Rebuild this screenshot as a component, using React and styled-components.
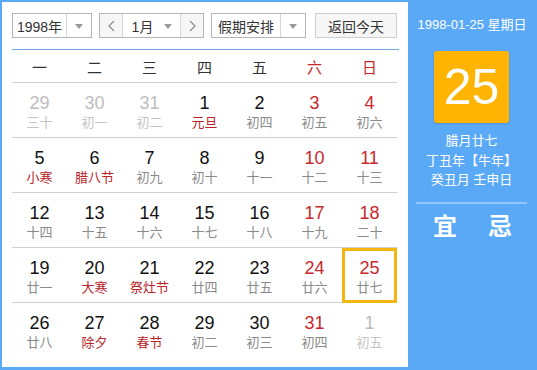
import styled, { createGlobalStyle } from "styled-components";

const GlobalStyle = createGlobalStyle`
  body {
    margin: 0;
    font-family: "Liberation Sans", "Noto Sans CJK SC", sans-serif;
  }
`;

const BLUE = "#5aa9f7";
const RED = "#c9272d";

const weekdays = ["一", "二", "三", "四", "五", "六", "日"];

// [day, lunar, kind] kind: o = other month, h = holiday (red lunar), s = selected
const weeks = [
  [["29", "三十", "o"], ["30", "初一", "o"], ["31", "初二", "o"], ["1", "元旦", "h"], ["2", "初四"], ["3", "初五"], ["4", "初六"]],
  [["5", "小寒", "h"], ["6", "腊八节", "h"], ["7", "初九"], ["8", "初十"], ["9", "十一"], ["10", "十二"], ["11", "十三"]],
  [["12", "十四"], ["13", "十五"], ["14", "十六"], ["15", "十七"], ["16", "十八"], ["17", "十九"], ["18", "二十"]],
  [["19", "廿一"], ["20", "大寒", "h"], ["21", "祭灶节", "h"], ["22", "廿四"], ["23", "廿五"], ["24", "廿六"], ["25", "廿七", "s"]],
  [["26", "廿八"], ["27", "除夕", "h"], ["28", "春节", "h"], ["29", "初二"], ["30", "初三"], ["31", "初四"], ["1", "初五", "o"]],
];

export default function App() {
  return (
    <>
      <GlobalStyle />
      <Frame>
        <Main>
          <Toolbar>
            <Select $width={80}>
              <SelectLabel>1998年</SelectLabel>
              <Caret />
            </Select>
            <MonthGroup>
              <StepButton>
                <Chevron dir="left" />
              </StepButton>
              <MonthSelect>
                <SelectLabel>1月</SelectLabel>
                <Caret $plain />
              </MonthSelect>
              <StepButton $right>
                <Chevron dir="right" />
              </StepButton>
            </MonthGroup>
            <Select $width={95}>
              <SelectLabel>假期安排</SelectLabel>
              <Caret />
            </Select>
            <TodayButton>返回今天</TodayButton>
          </Toolbar>
          <Grid>
            {weekdays.map((w, i) => (
              <WeekHead key={w} $weekend={i >= 5}>
                {w}
              </WeekHead>
            ))}
            {weeks.map((week, r) =>
              week.map(([day, lunar, kind], c) => (
                <Cell key={`${r}-${c}`} $selected={kind === "s"}>
                  <Day $other={kind === "o"} $weekend={c >= 5}>
                    {day}
                  </Day>
                  <Lunar $other={kind === "o"} $holiday={kind === "h"}>
                    {lunar}
                  </Lunar>
                </Cell>
              ))
            )}
          </Grid>
        </Main>
        <Side>
          <DateLine>1998-01-25 星期日</DateLine>
          <BigDay>25</BigDay>
          <LunarInfo>
            <div>腊月廿七</div>
            <div>
              丁丑年<Bracket>【</Bracket>牛年<Bracket>】</Bracket>
            </div>
            <div>癸丑月 壬申日</div>
          </LunarInfo>
          <Divider />
          <YiJi>
            <span>宜</span>
            <span>忌</span>
          </YiJi>
        </Side>
      </Frame>
    </>
  );
}

function Chevron({ dir }) {
  return (
    <svg width="7" height="12" viewBox="0 0 7 12">
      <path
        d={dir === "left" ? "M6 1 L1 6 L6 11" : "M1 1 L6 6 L1 11"}
        fill="none"
        stroke="#888"
        strokeWidth="1.1"
      />
    </svg>
  );
}

const Frame = styled.div`
  width: 537px;
  height: 370px;
  box-sizing: border-box;
  border: 2px solid ${BLUE};
  border-bottom-width: 3px;
  display: flex;
  background: #fff;
`;

const Main = styled.div`
  width: 406px;
  box-sizing: border-box;
  padding: 11px 9px 0 10px;
`;

const Toolbar = styled.div`
  display: flex;
  height: 25px;
  padding-bottom: 11px;
  border-bottom: 1px solid #6fb1e6;
`;

const Select = styled.div`
  width: ${(p) => p.$width}px;
  box-sizing: border-box;
  height: 25px;
  border: 1px solid #b4b4b4;
  display: flex;
  margin-right: ${(p) => (p.$width === 80 ? 7 : 9)}px;
  color: #333;
  font-size: 14px;
`;

const SelectLabel = styled.div`
  flex: 1;
  display: flex;
  align-items: center;
  justify-content: center;
`;

const Caret = styled.div`
  width: 24px;
  border-left: ${(p) => (p.$plain ? "none" : "1px solid #d6d6d6")};
  position: relative;
  &::after {
    content: "";
    position: absolute;
    left: 50%;
    top: 50%;
    margin: -2px 0 0 -4px;
    border: 4px solid transparent;
    border-top: 5px solid #999;
    border-bottom: none;
  }
`;

const MonthGroup = styled.div`
  width: 105px;
  box-sizing: border-box;
  height: 25px;
  border: 1px solid #b4b4b4;
  display: flex;
  margin-right: 7px;
`;

const StepButton = styled.div`
  width: 22px;
  background: #f6f6f6;
  display: flex;
  align-items: center;
  justify-content: center;
  border-${(p) => (p.$right ? "left" : "right")}: 1px solid #d6d6d6;
`;

const MonthSelect = styled.div`
  flex: 1;
  display: flex;
  color: #333;
  font-size: 14px;
  padding-left: 6px;
`;

const TodayButton = styled.div`
  width: 82px;
  box-sizing: border-box;
  height: 25px;
  border: 1px solid #cfcfcf;
  background: #f6f6f6;
  color: #333;
  font-size: 14px;
  display: flex;
  align-items: center;
  justify-content: center;
`;

const Grid = styled.div`
  display: grid;
  grid-template-columns: repeat(7, 55px);
  grid-auto-rows: 55px;
  grid-template-rows: 33px;
`;

const WeekHead = styled.div`
  display: flex;
  align-items: center;
  justify-content: center;
  font-size: 15px;
  color: ${(p) => (p.$weekend ? RED : "#333")};
  border-bottom: 1px solid #d0d0d0;
`;

const Cell = styled.div`
  box-sizing: border-box;
  display: flex;
  flex-direction: column;
  align-items: center;
  padding-top: ${(p) => (p.$selected ? 7 : 10)}px;
  border-bottom: 1px solid #d0d0d0;
  &:nth-last-child(-n + 7) {
    border-bottom: none;
  }
  ${(p) => p.$selected && `border: 3px solid #f5b50f; border-bottom: 3px solid #f5b50f !important;`}
`;

const Day = styled.div`
  font-size: 18px;
  line-height: 20px;
  color: ${(p) => (p.$other ? "#bdbdbd" : p.$weekend ? RED : "#111")};
`;

const Lunar = styled.div`
  margin-top: 1px;
  font-size: 13px;
  line-height: 18px;
  color: ${(p) => (p.$other ? "#c4c4c4" : p.$holiday ? "#b92227" : "#8a8a8a")};
`;

const Side = styled.div`
  flex: 1;
  background: ${BLUE};
  display: flex;
  flex-direction: column;
  align-items: center;
  color: #fff;
  padding-top: 14px;
`;

const DateLine = styled.div`
  font-size: 13px;
  line-height: 18px;
  padding-left: 1px;
`;

const BigDay = styled.div`
  margin-top: 17px;
  width: 75px;
  height: 72px;
  background: #ffb404;
  border-radius: 3px;
  box-shadow: 0 1px 2px rgba(0, 0, 0, 0.15);
  display: flex;
  align-items: center;
  justify-content: center;
  font-size: 50px;
  line-height: 1;
`;

const LunarInfo = styled.div`
  margin-top: 8px;
  font-size: 13px;
  line-height: 19.5px;
  text-align: center;
`;

const Bracket = styled.span`
  display: inline-block;
  width: 13px;
  text-align: center;
`;

const Divider = styled.div`
  margin-top: 12px;
  width: 111px;
  height: 2px;
  background: rgba(255, 255, 255, 0.35);
`;

const YiJi = styled.div`
  margin-top: 8px;
  display: flex;
  gap: 31px;
  padding-left: 2px;
  font-size: 24px;
  line-height: 30px;
  font-weight: bold;
`;
